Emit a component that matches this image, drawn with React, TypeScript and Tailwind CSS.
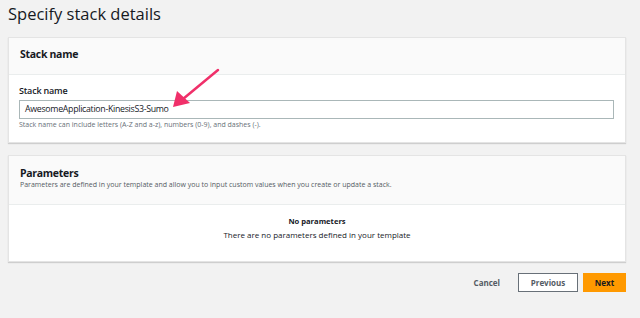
export default function App() {
  return (
    <div className="relative h-[318px] w-[640px] overflow-hidden bg-[#f2f2f2] font-['Open_Sans',sans-serif] text-[#16191f]">
      <h1 className="px-2 pt-[2px] text-[16.5px] leading-[24px] text-[#16191f]">Specify stack details</h1>

      <div className="mx-2 mt-[11px] w-[618px] border border-[#e4e4e4] bg-white shadow-[0_1px_1px_rgba(0,0,0,0.15)]">
        <div className="h-[37px] border-b border-[#eaeded] bg-[#fafafa] px-[11px] pt-[9px]">
          <h2 className="text-[10.5px] font-bold leading-[14px] tracking-[-0.3px]">Stack name</h2>
        </div>
        <div className="px-[10px] pb-[12px] pt-[10px]">
          <label className="block text-[9px] font-semibold leading-[12px] tracking-[-0.2px] text-[#16191f]">Stack name</label>
          <div className="mt-[3px] flex h-[19px] w-[595px] items-center border border-[#aab7b8] bg-white px-[5px] text-[8.8px] tracking-[-0.3px]">
            AwesomeApplication-KinesisS3-Sumo
          </div>
          <p className="mt-[1px] text-[7px] leading-[10px] text-[#687078]">
            Stack name can include letters (A-Z and a-z), numbers (0-9), and dashes (-).
          </p>
        </div>
      </div>

      <div className="mx-2 mt-[12px] w-[618px] border border-[#e4e4e4] bg-white shadow-[0_1px_1px_rgba(0,0,0,0.15)]">
        <div className="h-[49px] border-b border-[#eaeded] bg-[#fafafa] px-[11px] pt-[10px]">
          <h2 className="text-[10.5px] font-bold leading-[14px] tracking-[-0.3px]">Parameters</h2>
          <p className="text-[7px] leading-[10px] text-[#545b64]">
            Parameters are defined in your template and allow you to input custom values when you create or update a stack.
          </p>
        </div>
        <div className="h-[56px] pt-[11px] text-center">
          <p className="text-[7.6px] font-bold leading-[10px] text-[#16191f]">No parameters</p>
          <p className="mt-[3px] text-[8px] leading-[12px] text-[#16191f]">There are no parameters defined in your template</p>
        </div>
      </div>

      <div className="mt-[11px] flex w-[626px] items-center justify-end gap-[5px]">
        <button className="mr-[13px] text-[8px] font-bold text-[#545b64]">Cancel</button>
        <button className="h-[19px] w-[60px] border border-[#687078] bg-white text-[8px] font-bold text-[#545b64]">Previous</button>
        <button className="h-[19px] w-[43px] bg-[#ff9900] text-[8px] font-bold text-[#16191f]">Next</button>
      </div>

      <svg className="absolute left-0 top-0" width="640" height="318" viewBox="0 0 640 318">
        <line x1="218" y1="70" x2="183" y2="99" stroke="#f0306a" strokeWidth="2.5" strokeLinecap="round" />
        <polygon points="173,107 177,91 190,103" fill="#f0306a" />
      </svg>
    </div>
  );
}
